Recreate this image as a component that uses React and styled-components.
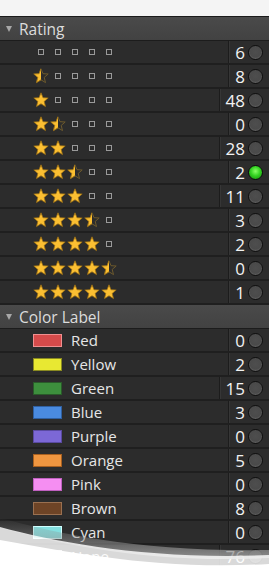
import React from "react";
import styled, { createGlobalStyle } from "styled-components";

const Global = createGlobalStyle`
  html, body { margin: 0; padding: 0; background: #ffffff; }
  body { font-family: "Open Sans", "Noto Sans", sans-serif; }
`;

const Page = styled.div`
  position: relative;
  width: 269px;
  height: 570px;
  overflow: hidden;
  background: #f4f4f4;
  padding-top: 16px;
  box-sizing: border-box;
`;

const Panel = styled.div`
  background: #2b2b2b;
  border-top: 1px solid #1a1a1a;
`;

const Header = styled.div`
  height: 24px;
  box-sizing: border-box;
  display: flex;
  align-items: center;
  background: linear-gradient(#4a4a4a, #424242);
  border-bottom: 1px solid #1c1c1c;
  color: #dcdcdc;
  font-size: 15.5px;
  padding-left: 6px;
`;

const Arrow = styled.span`
  width: 0;
  height: 0;
  border-left: 3.5px solid transparent;
  border-right: 3.5px solid transparent;
  border-top: 6px solid #a8a8a8;
  margin-right: 7px;
  margin-top: 1px;
`;

const Row = styled.div`
  height: 24px;
  box-sizing: border-box;
  display: flex;
  align-items: stretch;
  background: #2c2c2c;
  border-bottom: 2px solid #1f1f1f;
`;

const Main = styled.div`
  flex: 1;
  display: flex;
  align-items: center;
  padding-left: 33px;
`;

const Count = styled.div`
  flex: none;
  display: flex;
  align-items: center;
  justify-content: flex-end;
  border-left: 1px solid #1c1c1c;
  box-shadow: inset 1px 0 0 #363636;
  padding-left: 6px;
  padding-right: 6px;
  color: #f2f2f2;
  font-size: 17px;
  gap: 3px;
`;

const Dot = styled.span`
  flex: none;
  display: block;
  width: 15px;
  height: 15px;
  box-sizing: border-box;
  border-radius: 50%;
  border: 1px solid #0e0e0e;
  background: ${(p) =>
    p.$on
      ? "radial-gradient(circle at 50% 40%, #8aff66 0%, #34d322 45%, #13860c 100%)"
      : "radial-gradient(circle at 50% 45%, #4e4e4e 0%, #4a4a4a 55%, #626262 75%, #3a3a3a 100%)"};
`;

const Stars = styled.div`
  display: flex;
  gap: 1px;
`;

const Slot = styled.span`
  width: 16px;
  height: 16px;
  display: flex;
  align-items: center;
  justify-content: center;
`;

const Square = styled.span`
  width: 4px;
  height: 4px;
  border: 1px solid #9a9a9a;
`;

const Swatch = styled.span`
  flex: none;
  width: 27px;
  height: 11px;
  background: ${(p) => p.$c};
  border: 1px solid ${(p) => p.$b};
  margin-right: 9px;
`;

const Label = styled.span`
  color: #e6e6e6;
  font-size: 15px;
`;

const Curl = styled.svg`
  position: absolute;
  left: 0;
  bottom: 0;
  width: 269px;
  height: 60px;
  pointer-events: none;
`;

const STAR = "M8 0.8 L10 5.7 L15.2 6 L11.2 9.4 L12.5 14.6 L8 11.8 L3.5 14.6 L4.8 9.4 L0.8 6 L6 5.7 Z";

function Star({ kind }) {
  if (kind === "empty") {
    return (
      <Slot>
        <Square />
      </Slot>
    );
  }
  return (
    <Slot>
      <svg width="16" height="16" viewBox="0 0 16 16">
        <defs>
          <clipPath id="halfclip">
            <rect x="0" y="0" width="8" height="16" />
          </clipPath>
        </defs>
        {kind === "full" ? (
          <path d={STAR} fill="#fbbf32" stroke="#9a6e14" strokeWidth="0.8" strokeLinejoin="round" />
        ) : (
          <>
            <path d={STAR} fill="none" stroke="#6e5a2c" strokeWidth="1" strokeLinejoin="round" />
            <path d={STAR} fill="#fbbf32" stroke="#9a6e14" strokeWidth="0.8" clipPath="url(#halfclip)" />
          </>
        )}
      </svg>
    </Slot>
  );
}

const ratings = [
  { r: 0, n: 6 },
  { r: 0.5, n: 8 },
  { r: 1, n: 48 },
  { r: 1.5, n: 0 },
  { r: 2, n: 28 },
  { r: 2.5, n: 2, on: true },
  { r: 3, n: 11 },
  { r: 3.5, n: 3 },
  { r: 4, n: 2 },
  { r: 4.5, n: 0 },
  { r: 5, n: 1 },
];

const colors = [
  { name: "Red", c: "#d64b4b", b: "#f09090", n: 0 },
  { name: "Yellow", c: "#e8e832", b: "#8a8a20", n: 2 },
  { name: "Green", c: "#3d8f3d", b: "#2a5a2a", n: 15 },
  { name: "Blue", c: "#4a8be0", b: "#3060a0", n: 3 },
  { name: "Purple", c: "#7c68d6", b: "#5a4aa0", n: 0 },
  { name: "Orange", c: "#ef9640", b: "#a86020", n: 5 },
  { name: "Pink", c: "#f58ef2", b: "#c060c0", n: 0 },
  { name: "Brown", c: "#6e4426", b: "#9a7050", n: 8 },
  { name: "Cyan", c: "#84e0e0", b: "#d0ffff", n: 0 },
  { name: "None", c: "#2c2c2c", b: "#cfcfcf", n: 76 },
];

function starKinds(r) {
  const out = [];
  for (let i = 0; i < 5; i++) {
    if (r >= i + 1) out.push("full");
    else if (r >= i + 0.5) out.push("half");
    else out.push("empty");
  }
  return out;
}

export default function App() {
  return (
    <>
      <Global />
      <Page>
        <Panel>
          <Header>
            <Arrow />
            Rating
          </Header>
          {ratings.map((row, i) => (
            <Row key={i}>
              <Main>
                <Stars>
                  {starKinds(row.r).map((k, j) => (
                    <Star key={j} kind={k} />
                  ))}
                </Stars>
              </Main>
              <Count>
                {row.n}
                <Dot $on={row.on} />
              </Count>
            </Row>
          ))}
          <Header>
            <Arrow />
            Color Label
          </Header>
          {colors.map((row) => (
            <Row key={row.name}>
              <Main>
                <Swatch $c={row.c} $b={row.b} />
                <Label>{row.name}</Label>
              </Main>
              <Count>
                {row.n}
                <Dot />
              </Count>
            </Row>
          ))}
        </Panel>
        <Curl viewBox="0 0 269 60">
          <defs>
            <linearGradient id="shade" x1="0" y1="0" x2="0" y2="1">
              <stop offset="0" stopColor="#8a8a8a" stopOpacity="0" />
              <stop offset="1" stopColor="#9a9a9a" stopOpacity="0.9" />
            </linearGradient>
          </defs>
          <path d="M0 8 C 60 24, 140 42, 269 40 L269 48 C 150 54, 60 34, 0 18 Z" fill="url(#shade)" />
          <path d="M0 17 C 60 33, 150 50, 269 45 L269 60 L0 60 Z" fill="#ffffff" fillOpacity="0.82" />
          <path d="M0 30 C 80 44, 160 60, 269 54 L269 60 L0 60 Z" fill="#ffffff" />
        </Curl>
      </Page>
    </>
  );
}
